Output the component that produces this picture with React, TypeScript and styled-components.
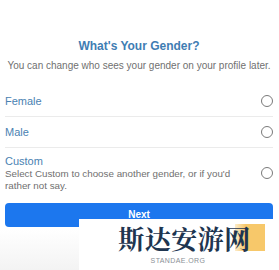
import styled, { createGlobalStyle } from "styled-components"

const GlobalStyle = createGlobalStyle`
  html, body {
    margin: 0;
    padding: 0;
    background: #ffffff;
    font-family: "Liberation Sans", Arial, sans-serif;
  }
`

interface OptionProps {
  label: string
  hint?: string
}

function Option({ label, hint }: OptionProps): JSX.Element {
  return (
    <Row $tall={!!hint}>
      <div>
        <Label>{label}</Label>
        {hint && <Hint>{hint}</Hint>}
      </div>
      <Radio />
    </Row>
  )
}

export default function App(): JSX.Element {
  return (
    <Page>
      <GlobalStyle />
      <Title>What's Your Gender?</Title>
      <Subtitle>You can change who sees your gender on your profile later.</Subtitle>
      <List>
        <Option label="Female" />
        <Option label="Male" />
        <Option
          label="Custom"
          hint="Select Custom to choose another gender, or if you'd rather not say."
        />
      </List>
      <NextButton>Next</NextButton>
      <Watermark>
        <Brand>
          <Accent />
          <BrandText>斯达安游网</BrandText>
        </Brand>
        <Domain>STANDAE.ORG</Domain>
      </Watermark>
    </Page>
  )
}

const Page = styled.div`
  position: relative;
  width: 279px;
  height: 270px;
  overflow: hidden;
  padding: 38px 6px 0 5px;
  box-sizing: border-box;
  background: linear-gradient(to bottom, #ffffff 85%, #f3f3f3 100%);
`

const Title = styled.h1`
  margin: 0;
  text-align: center;
  font-size: 12px;
  line-height: 16px;
  font-weight: 700;
  color: #3f7db3;
`

const Subtitle = styled.p`
  margin: 6px 0 0;
  text-align: center;
  font-size: 10px;
  line-height: 12px;
  color: #707070;
  white-space: nowrap;
`

const List = styled.div`
  margin-top: 14px;
  display: flex;
  flex-direction: column;
`

const Row = styled.div<{ $tall: boolean }>`
  display: flex;
  align-items: center;
  justify-content: space-between;
  height: ${(p) => (p.$tall ? "46px" : "31px")};
  border-bottom: 1px solid ${(p) => (p.$tall ? "transparent" : "#ebebeb")};
  padding-top: ${(p) => (p.$tall ? "5px" : "0")};
  box-sizing: border-box;
`

const Label = styled.div`
  font-size: 11px;
  line-height: 13px;
  color: #4a82b2;
`

const Hint = styled.div`
  width: 238px;
  font-size: 9.8px;
  line-height: 12px;
  color: #6f6f6f;
`

const Radio = styled.span`
  width: 10px;
  height: 10px;
  border: 1.5px solid #7a7a7a;
  border-radius: 50%;
  flex-shrink: 0;
`

const NextButton = styled.button`
  display: block;
  width: 100%;
  height: 24px;
  margin-top: 9px;
  border: none;
  border-radius: 4px;
  background: #1c77ee;
  color: #ffffff;
  font-family: "Liberation Sans", Arial, sans-serif;
  font-size: 10px;
  font-weight: 700;
  line-height: 24px;
  padding: 0;
`

const Watermark = styled.div`
  position: absolute;
  left: 79px;
  top: 219px;
  right: 0;
  bottom: 0;
  background: #ffffff;
  display: flex;
  flex-direction: column;
  align-items: center;
`

const Brand = styled.div`
  position: relative;
  margin-top: 4px;
  margin-left: 11px;
`

const Accent = styled.span`
  position: absolute;
  right: -14px;
  top: 1px;
  width: 30px;
  height: 27px;
  background: linear-gradient(to right, rgba(247, 200, 106, 0.35), #f7c86a 35%);
`

const BrandText = styled.div`
  position: relative;
  font-family: "Noto Serif CJK SC", "Noto Sans CJK SC", serif;
  font-size: 26px;
  line-height: 30px;
  letter-spacing: 0.5px;
  color: #1e3550;
  font-weight: 700;
`

const Domain = styled.div`
  margin-top: 4px;
  margin-left: -2px;
  font-size: 7px;
  letter-spacing: 0.4px;
  color: #8a8f96;
`
